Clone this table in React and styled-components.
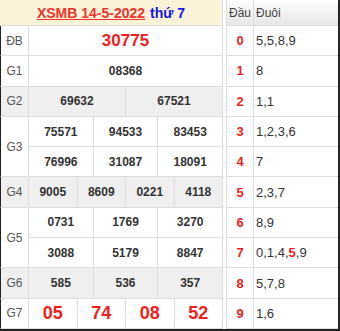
import React from 'react'
import styled, { createGlobalStyle } from 'styled-components'

const GlobalStyle = createGlobalStyle`
  body {
    margin: 0;
    background: #fff;
    font-family: "Liberation Sans", Arial, sans-serif;
  }
`

const Frame = styled.div`
  width: 340px;
  height: 331px;
  box-sizing: border-box;
  display: flex;
  gap: 3px;
  border-right: 2px solid #222;
  border-bottom: 2px solid #222;
  overflow: hidden;
`

const Board = styled.div`
  width: 223px;
  display: grid;
  grid-template-columns: 29px 1fr;
  grid-template-rows: 26px repeat(10, 1fr);
`

const Title = styled.div`
  grid-column: 1 / span 2;
  background: #fbf3d8;
  border-right: 1px solid #ddd;
  border-bottom: 1px solid #ddd;
  display: flex;
  align-items: center;
  justify-content: center;
  gap: 5px;
  font-size: 14px;
  font-weight: bold;
`

const TitleLink = styled.span`
  color: #f0322a;
  text-decoration: underline;
`

const Weekday = styled.span`
  color: #1515e6;
`

const Label = styled.div`
  grid-row: span ${p => p.$span || 1};
  background: ${p => (p.$shade ? '#efefef' : '#fff')};
  border-left: 1px solid #222;
  border-right: 1px solid #ddd;
  border-bottom: 1px solid #ddd;
  display: flex;
  align-items: center;
  justify-content: center;
  font-size: 12px;
  color: #555;
`

const Numbers = styled.div`
  display: flex;
  background: ${p => (p.$shade ? '#efefef' : '#fff')};
  border-right: 1px solid #ddd;
  border-bottom: 1px solid #ddd;
`

const Num = styled.div`
  flex: 1;
  display: flex;
  align-items: center;
  justify-content: center;
  font-weight: bold;
  font-size: ${p => p.$size || 12}px;
  color: ${p => (p.$red ? '#f21d1d' : '#333')};
  & + & {
    border-left: 1px solid #ddd;
  }
`

const Tails = styled.div`
  flex: 1;
  display: grid;
  grid-template-columns: 28px 1fr;
  grid-template-rows: 26px repeat(10, 1fr);
`

const HeadCell = styled.div`
  background: linear-gradient(#fdfdfd, #e7e7e7);
  border-left: ${p => (p.$first ? '1px solid #ddd' : 'none')};
  border-right: ${p => (p.$first ? '1px solid #ddd' : 'none')};
  border-bottom: 1px solid #ddd;
  display: flex;
  align-items: center;
  justify-content: ${p => (p.$first ? 'center' : 'flex-start')};
  padding-left: ${p => (p.$first ? 0 : 2)}px;
  font-size: 12px;
  color: #444;
`

const Head = styled.div`
  border-left: 1px solid #ddd;
  border-right: 1px solid #ddd;
  border-bottom: 1px solid #ddd;
  display: flex;
  align-items: center;
  justify-content: center;
  font-size: 13px;
  font-weight: bold;
  color: #f21d1d;
`

const Tail = styled.div`
  border-bottom: 1px solid #ddd;
  display: flex;
  align-items: center;
  padding-left: 2px;
  font-size: 13px;
  color: #333;
`

const Hit = styled.span`
  color: #f21d1d;
  font-weight: bold;
`

const prizes = [
  { label: 'ĐB', rows: [['30775']], size: 17, red: true },
  { label: 'G1', rows: [['08368']] },
  { label: 'G2', rows: [['69632', '67521']], shade: true },
  { label: 'G3', rows: [['75571', '94533', '83453'], ['76996', '31087', '18091']] },
  { label: 'G4', rows: [['9005', '8609', '0221', '4118']], shade: true },
  { label: 'G5', rows: [['0731', '1769', '3270'], ['3088', '5179', '8847']] },
  { label: 'G6', rows: [['585', '536', '357']], shade: true },
  { label: 'G7', rows: [['05', '74', '08', '52']], size: 18, red: true },
]

const tails = [
  '5,5,8,9', '8', '1,1', '1,2,3,6', '7', '2,3,7', '8,9', null, '5,7,8', '1,6',
]

export default function App() {
  return (
    <>
      <GlobalStyle />
      <Frame>
        <Board>
          <Title>
            <TitleLink>XSMB 14-5-2022</TitleLink>
            <Weekday>thứ 7</Weekday>
          </Title>
          {prizes.map(p => (
            <React.Fragment key={p.label}>
              <Label $span={p.rows.length} $shade={p.shade}>{p.label}</Label>
              {p.rows.map((row, i) => (
                <Numbers key={i} $shade={p.shade}>
                  {row.map(n => (
                    <Num key={n} $size={p.size} $red={p.red}>{n}</Num>
                  ))}
                </Numbers>
              ))}
            </React.Fragment>
          ))}
        </Board>
        <Tails>
          <HeadCell $first>Đầu</HeadCell>
          <HeadCell>Đuôi</HeadCell>
          {tails.map((t, i) => (
            <React.Fragment key={i}>
              <Head>{i}</Head>
              <Tail>
                {t === null ? (
                  <>0,1,4,<Hit>5</Hit>,9</>
                ) : t}
              </Tail>
            </React.Fragment>
          ))}
        </Tails>
      </Frame>
    </>
  )
}
